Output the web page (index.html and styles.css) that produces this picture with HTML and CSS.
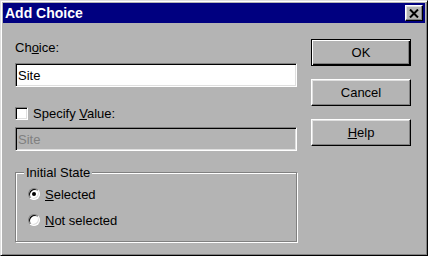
FILE: index.html
```html
<!DOCTYPE html>
<html lang="en">
<head>
    <meta charset="UTF-8">
    <title>Add Choice</title>
    <link rel="stylesheet" href="styles.css">
</head>
<body>
    <div class="window">
        <div class="titlebar">
            <span class="title">Add Choice</span>
            <button class="close-btn">
                <svg width="10" height="9" viewBox="0 0 10 9">
                    <path d="M1 0.5 L9 8.5 M9 0.5 L1 8.5" stroke="#000" stroke-width="2"/>
                </svg>
            </button>
        </div>
        <div class="dialog">
            <div class="fields">
                <label class="field-label" for="choice">Ch<u>o</u>ice:</label>
                <input class="textbox" id="choice" type="text" value="Site">

                <label class="check-row"><span class="checkbox"></span><span>Specify <u>V</u>alue:</span></label>
                <input class="textbox disabled" type="text" value="Site" disabled>

                <fieldset class="group">
                    <legend>Initial State</legend>
                    <div class="radio-row"><span class="radio checked"></span><span><u>S</u>elected</span></div>
                    <div class="radio-row"><span class="radio"></span><span><u>N</u>ot selected</span></div>
                </fieldset>
            </div>
            <div class="buttons">
                <button class="btn default">OK</button>
                <button class="btn">Cancel</button>
                <button class="btn"><u>H</u>elp</button>
            </div>
        </div>
    </div>
</body>
</html>
```

FILE: styles.css
```css
* {
    box-sizing: border-box;
}
body {
    margin: 0;
    font-family: "Liberation Sans", Arial, sans-serif;
    font-size: 13px;
    color: #000;
    background-color: #b4b4b4;
}
.window {
    width: 428px;
    height: 256px;
    padding: 2px;
    background-color: #b4b4b4;
    border: 1px solid;
    border-color: #dfdfdf #000 #000 #dfdfdf;
    box-shadow: inset 1px 1px #fff, inset -1px -1px #808080;
}
.titlebar {
    height: 20px;
    padding: 0 2px;
    background-color: #000080;
    display: flex;
    align-items: center;
    justify-content: space-between;
}
.title {
    color: #fff;
    font-weight: bold;
    font-size: 14px;
    line-height: 20px;
}
.close-btn {
    width: 18px;
    height: 16px;
    padding: 0;
    background-color: #b4b4b4;
    border: 1px solid;
    border-color: #fff #000 #000 #fff;
    box-shadow: inset -1px -1px #808080, inset 1px 1px #dfdfdf;
    display: flex;
    align-items: center;
    justify-content: center;
}
.dialog {
    display: flex;
    gap: 14px;
    padding: 0 12px;
}
.fields {
    width: 282px;
    padding-top: 17px;
    display: flex;
    flex-direction: column;
}
.field-label {
    height: 15px;
    line-height: 15px;
}
.textbox {
    margin: 8px 0 0 0;
    height: 24px;
    padding: 0 2px;
    font-family: inherit;
    font-size: 13px;
    color: #000;
    background-color: #fff;
    border: 1px solid;
    border-color: #808080 #fff #fff #808080;
    box-shadow: inset 1px 1px #000, inset -1px -1px #dfdfdf;
    outline: none;
}
.textbox.disabled {
    margin-top: 6px;
    color: #808080;
    background-color: #b4b4b4;
}
.check-row {
    margin-top: 18px;
    height: 16px;
    display: flex;
    align-items: center;
    gap: 5px;
}
.checkbox {
    width: 13px;
    height: 13px;
    background-color: #fff;
    border: 1px solid;
    border-color: #808080 #fff #fff #808080;
    box-shadow: inset 1px 1px #000, inset -1px -1px #dfdfdf;
}
.group {
    margin: 14px 0 0 0;
    padding: 6px 0 13px 12px;
    min-inline-size: 0;
    border: 1px solid #808080;
    box-shadow: 1px 1px #fff, inset 1px 1px #fff;
}
.group legend {
    margin-left: -4px;
    padding: 0 2px;
    line-height: 15px;
    background-color: #b4b4b4;
}
.radio-row {
    height: 16px;
    display: flex;
    align-items: center;
    gap: 5px;
}
.radio-row + .radio-row {
    margin-top: 10px;
}
.radio {
    width: 12px;
    height: 12px;
    border-radius: 50%;
    background-color: #fff;
    border: 1px solid;
    border-color: #808080 #fff #fff #808080;
    box-shadow: inset 1px 1px #000, inset -1px -1px #dfdfdf;
    display: flex;
    align-items: center;
    justify-content: center;
}
.radio.checked::after {
    content: "";
    width: 4px;
    height: 4px;
    border-radius: 50%;
    background-color: #000;
}
.buttons {
    width: 100px;
    padding-top: 16px;
    display: flex;
    flex-direction: column;
    gap: 13px;
}
.btn {
    height: 27px;
    padding: 0;
    font-family: inherit;
    font-size: 13px;
    color: #000;
    background-color: #b4b4b4;
    border: 1px solid;
    border-color: #fff #000 #000 #fff;
    box-shadow: inset -1px -1px #808080, inset 1px 1px #dfdfdf;
}
.btn.default {
    border-color: #000;
    box-shadow: inset 1px 1px #fff, inset -1px -1px #000, inset -2px -2px #808080;
}
```
